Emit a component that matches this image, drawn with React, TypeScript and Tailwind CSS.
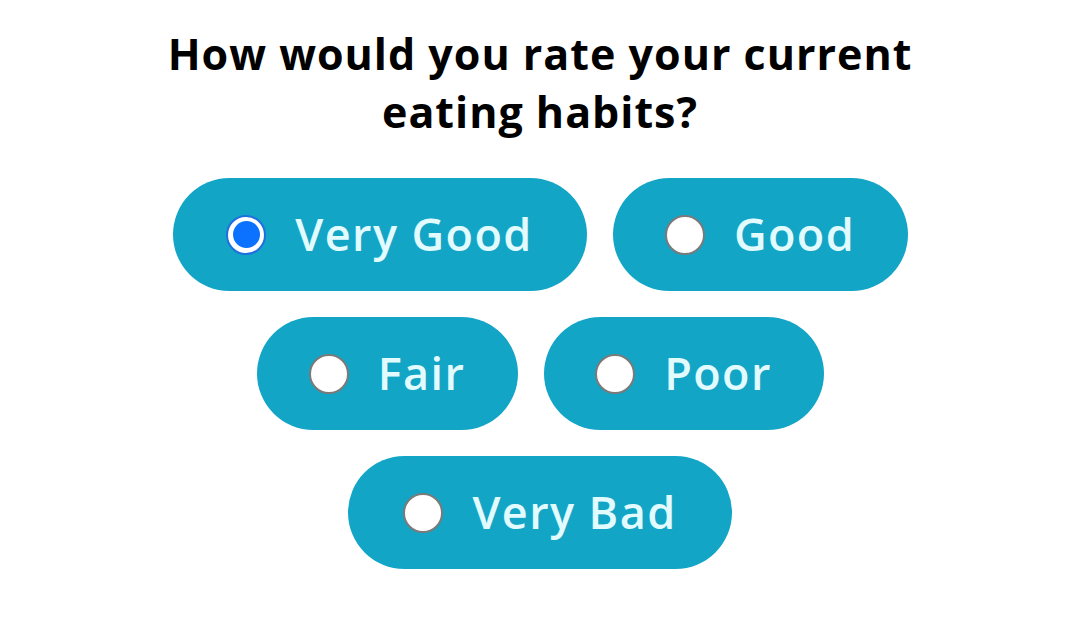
const options = [
  { label: 'Very Good', w: 'w-[414px]' },
  { label: 'Good', w: 'w-[295px]' },
  { label: 'Fair', w: 'w-[261px]' },
  { label: 'Poor', w: 'w-[280px]' },
  { label: 'Very Bad', w: 'w-[384px]' },
]

const rows = [options.slice(0, 2), options.slice(2, 4), options.slice(4)]

function Radio({ checked }: { checked: boolean }) {
  if (checked) {
    return (
      <span className="flex h-[40px] w-[40px] shrink-0 items-center justify-center rounded-full border-2 border-[#1f6fe0] bg-white">
        <span className="h-[27px] w-[27px] rounded-full bg-[#0b72ff]" />
      </span>
    )
  }
  return <span className="h-[40px] w-[40px] shrink-0 rounded-full border-2 border-[#7a7a7a] bg-white" />
}

export default function App() {
  const selected = 'Very Good'
  return (
    <div className="min-h-screen bg-white flex flex-col items-center pt-[25px] font-['Open_Sans',sans-serif]">
      <h1 className="text-center text-[43px] leading-[58px] font-bold text-black tracking-[1px]">
        How would you rate your current
        <br />
        eating habits?
      </h1>
      <div className="mt-[37px] flex flex-col items-center gap-[26px]">
        {rows.map((row, i) => (
          <div key={i} className="flex gap-[26px]">
            {row.map((opt) => (
              <label
                key={opt.label}
                className={`flex h-[113px] items-center justify-center gap-[29px] rounded-full bg-[#12a5c6] ${opt.w}`}
              >
                <Radio checked={opt.label === selected} />
                <span className="text-[45px] leading-none pb-[2px] font-semibold text-[#e2fbff] tracking-[1.4px]">{opt.label}</span>
              </label>
            ))}
          </div>
        ))}
      </div>
    </div>
  )
}
